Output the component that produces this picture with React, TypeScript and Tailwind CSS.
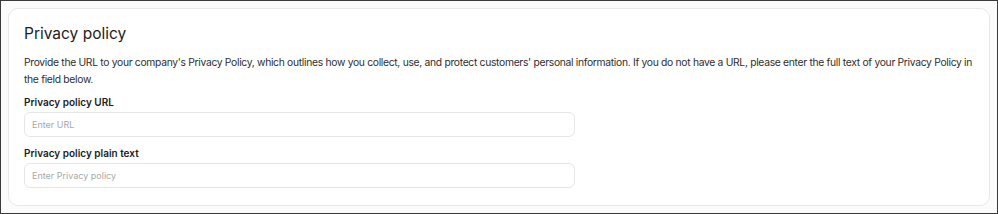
export default function App() {
  return (
    <div className="w-[998px] h-[214px] border border-[#3a3a3a] bg-[#fbfbfb] p-[7px] font-['Inter',sans-serif]">
      <section className="h-[198px] rounded-[10px] border border-[#e8e8e8] bg-white px-[15px] pt-[14px]">
        <h2 className="text-[15.5px] leading-[22px] text-[#1c1c1c]">Privacy policy</h2>
        <p className="mt-[9px] text-[10.3px] leading-[17px] tracking-[-0.3px] text-[#2e2e2e]">
          Provide the URL to your company's Privacy Policy, which outlines how you collect, use, and protect customers' personal information. If you do not have a URL, please enter the full text of your Privacy Policy in the field below.
        </p>
        <div className="mt-[7px] flex w-[551px] flex-col gap-[3px]">
          <label className="text-[10px] font-semibold leading-[14px] text-[#1c1c1c]">Privacy policy URL</label>
          <input
            className="h-[25px] rounded-[6px] border border-[#e6e6e6] px-[7px] text-[9px] text-[#333] placeholder:text-[#a8a8a8] outline-none"
            placeholder="Enter URL"
          />
        </div>
        <div className="mt-[9px] flex w-[551px] flex-col gap-[3px]">
          <label className="text-[10px] font-semibold leading-[14px] text-[#1c1c1c]">Privacy policy plain text</label>
          <input
            className="h-[25px] rounded-[6px] border border-[#e6e6e6] px-[7px] text-[9px] text-[#333] placeholder:text-[#a8a8a8] outline-none"
            placeholder="Enter Privacy policy"
          />
        </div>
      </section>
    </div>
  );
}
